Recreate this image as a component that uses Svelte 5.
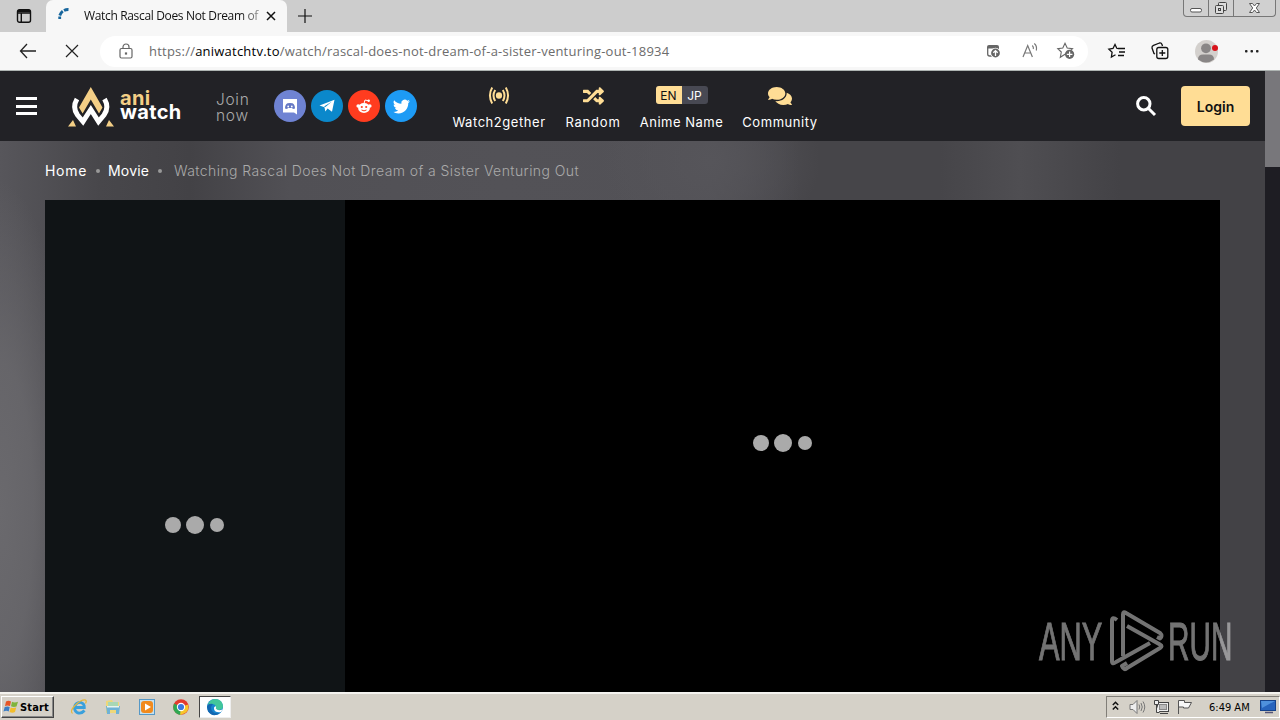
<script>
  const crumbs = ['Home', 'Movie'];
</script>

{#snippet loader()}
  <div class="loader"><i></i><i class="big"></i><i class="small"></i></div>
{/snippet}

<div class="screen">
  <div class="tabs">
    <svg class="tabmenu" width="16" height="16" viewBox="0 0 16 16" fill="none" stroke="#111" stroke-width="1.4"><rect x="1.5" y="1.7" width="13" height="12.6" rx="2" /><path d="M2 5h12M5.3 5v9" /><path d="M2 3h12" stroke-width="2.4" /></svg>
    <div class="tab">
      <svg width="12" height="12" viewBox="0 0 12 12" fill="none" stroke="#17669d" stroke-width="2.8"><path d="M1.700 11V8.500M1.800 7.500Q2.500 5 4.800 3.200M6 2.500Q8 1.400 10.500 1.500" /></svg>
      <span class="tabtitle">Watch Rascal Does Not Dream of</span>
      <svg class="close" width="10" height="10" viewBox="0 0 10 10" stroke="#111" stroke-width="1.5"><path d="M1 1l8 8M9 1L1 9" /></svg>
    </div>
    <svg class="plus" width="16" height="16" viewBox="0 0 16 16" stroke="#111" stroke-width="1.2"><path d="M8 1v14M1 8h14" /></svg>
    <div class="winbtns">
      <span><svg width="25" height="16" viewBox="0 0 25 16" fill="#fff" stroke="#555"><rect x="6.500" y="8.500" width="11" height="3.500" rx="1.500" /></svg></span>
      <span><svg width="24" height="16" viewBox="0 0 24 16" fill="#ddd" stroke="#444"><rect x="9.500" y="2.500" width="8" height="8" rx="1" /><rect x="6.500" y="5.500" width="8" height="8" rx="1" /><rect x="9.500" y="8.500" width="2" height="2" /></svg></span>
      <span><svg width="41" height="16" viewBox="0 0 41 16" fill="#fff" stroke="#555"><path d="M15.500 3.500h3l2 2.500 2-2.500h3l-3.200 4.500 3.200 4.500h-3l-2-2.500-2 2.500h-3l3.200-4.500z" /></svg></span>
    </div>
  </div>

  <div class="toolbar">
    <svg class="back" width="18" height="16" viewBox="0 0 18 16" fill="none" stroke="#222" stroke-width="1.300"><path d="M8 1L1.500 8 8 15M1.500 8H17" /></svg>
    <svg class="stop" width="14" height="14" viewBox="0 0 14 14" stroke="#222" stroke-width="1.200"><path d="M1 1l12 12M13 1L1 13" /></svg>
    <div class="address">
      <svg class="lock" width="14" height="17" viewBox="0 0 14 17" fill="none" stroke="#666" stroke-width="1.200"><rect x="1" y="5.500" width="12" height="9.500" rx="1.500" /><path d="M4 5.500V4a3 3 0 016 0v1.500" /><rect x="6.500" y="10" width="1" height="1" /></svg>
      <span class="url">https://<b>aniwatchtv.to</b>/watch/rascal-does-not-dream-of-a-sister-venturing-out-18934</span>
      <svg class="a1" width="16" height="16" viewBox="0 0 16 16"><path d="M1.700 4v6a2 2 0 002 2H6M12.300 3v2" fill="none" stroke="#666" stroke-width="1.300" /><path d="M1 4.500V3a2 2 0 012-2h8a2 2 0 012 2v1.500z" fill="#666" /><circle cx="9.500" cy="9" r="5.200" fill="#fff" /><circle cx="9.500" cy="9" r="4.400" fill="#666" /><path d="M9.500 12V7M7.300 8.800l2.200-2.200 2.200 2.200" fill="none" stroke="#fff" stroke-width="1.300" /></svg>
      <svg class="a2" width="18" height="16" viewBox="0 0 18 16" fill="none" stroke="#777" stroke-width="1.200"><path d="M1 14L5.700 2.500 10.400 14M2.800 10h5.800M10.300 2.500q1.500 1.500 1 3.500M12.300 .5q3 2.500 2 7" /></svg>
      <svg class="a3" width="18" height="18" viewBox="0 0 18 18"><path d="M8 1.300l2.200 4.800 5.300.6-3.900 3.600L8 12.300l-4.700 3 1-5.300L.8 6.700l5-.6z" fill="none" stroke="#666" stroke-width="1.100" /><circle cx="12.600" cy="12.300" r="4.600" fill="#666" /><path d="M12.600 9.500v5.600M9.800 12.300h5.600" stroke="#fff" stroke-width="1.200" /></svg>
    </div>
    <svg class="fav" width="18" height="16" viewBox="0 0 18 16" fill="none" stroke="#111" stroke-width="1.300"><path d="M10.300 5.600L8.800 5.300 7 1.400 5 5.500.9 6.200l3.200 3L3.400 14 7.500 11.800M10 5.500h7M11 9h6M10 12.500h6" /></svg>
    <svg class="coll" width="18" height="18" viewBox="0 0 18 18" fill="none" stroke="#111" stroke-width="1.300"><path d="M4 12L3 11.500 1 6Q.7 4 2.500 3.300L8.500 1Q10.300 .6 11 2.500L11.500 4" /><rect x="5.800" y="5.500" width="11" height="11" rx="2" /><path d="M11.300 8v6M8.300 11h6" /></svg>
    <div class="avatar"><svg width="23" height="23" viewBox="0 0 23 23"><circle cx="11.500" cy="11.500" r="11.500" fill="#d3d0cd" /><circle cx="11" cy="8.300" r="4.900" fill="#898686" /><path d="M3 19.500q0-5 5-5h6q5 0 5 5-8 6-16 0z" fill="#898686" /><circle cx="20" cy="8" r="3" fill="#d8131b" /></svg></div>
    <svg class="dots" width="14" height="4" viewBox="0 0 14 4" fill="#222"><rect x="0" y="1" width="2.500" height="2.500" rx=".8" /><rect x="5.500" y="1" width="2.500" height="2.500" rx=".8" /><rect x="11" y="1" width="2.500" height="2.500" rx=".8" /></svg>
  </div>

  <div class="view">
    <div class="site">
      <header>
        <div class="burger"><i></i><i></i><i></i></div>
        <svg class="logo" width="46" height="41" viewBox="0 0 46 41"><path d="M9 12Q4 20.500 9.500 28L15 34.500 22.800 22.500 30.500 34.500 36 28Q41.500 20.500 36.500 12" fill="none" stroke="#fff" stroke-width="5" /><path d="M22.800 0L34.500 20.500 31 26.500 22.800 12.500 14.600 26.500 11 20.500z" fill="#f4cf86" /><path d="M5 33L8 39.500H0zM41 33L38 39.500h8z" fill="#f4cf86" /></svg>
        <div class="wordmark"><span class="gold">ani</span><span>watch</span></div>
        <div class="join">Join<br />now</div>
        <div class="social">
          <span class="discord"><svg width="16" height="17" viewBox="0 0 16 17"><path d="M1 1h14v15.500l-3-2H1z" fill="#fff" /><path d="M3 10.500q0-4 2.500-5.200L8 5l2.500.3Q13 6.500 13 10.500L11 11l-1-1H6l-1 1z" fill="#6578c4" /><circle cx="6.200" cy="8.500" r=".9" fill="#fff" /><circle cx="9.800" cy="8.500" r=".9" fill="#fff" /></svg></span>
          <span class="telegram"><svg width="16" height="14" viewBox="0 0 16 14" fill="#fff"><path d="M15.500.8L13 12.800 8.600 9.600 6.300 12.500 5.500 8.200.5 6.500zM6.400 8L13 2.500 5 7.500z" /></svg></span>
          <span class="reddit"><svg width="16" height="16" viewBox="0 0 16 16"><ellipse cx="8" cy="10" rx="5.900" ry="4.900" fill="#fff" /><circle cx="2.200" cy="8" r="1.800" fill="#fff" /><circle cx="13.800" cy="8" r="1.800" fill="#fff" /><path d="M8 5.500L9 2l3.500.8" fill="none" stroke="#fff" /><circle cx="12.700" cy="2.700" r="1.200" fill="#fff" /><circle cx="5.800" cy="9" r="1.100" fill="#ff3d20" /><circle cx="10.200" cy="9" r="1.100" fill="#ff3d20" /><path d="M5.500 12q2.500 1.700 5 0" fill="none" stroke="#ff3d20" /></svg></span>
          <span class="twitter"><svg width="17" height="17" viewBox="0 0 24 24" fill="#fff"><path d="M23.950 4.570a10 10 0 01-2.820.770 4.960 4.960 0 002.160-2.720c-.950.550-2 .950-3.130 1.180a4.920 4.920 0 00-8.380 4.480C7.690 8.090 4.070 6.130 1.640 3.160a4.920 4.920 0 001.520 6.570 4.900 4.900 0 01-2.230-.610v.060a4.920 4.920 0 003.950 4.830 5 5 0 01-2.210.080 4.940 4.940 0 004.600 3.420A9.870 9.870 0 010 19.540a14 14 0 007.550 2.210c9.050 0 14-7.500 14-13.980 0-.210 0-.420-.020-.630a9.940 9.940 0 002.420-2.570z" /></svg></span>
        </div>
        <nav>
          <div class="n1"><svg width="20" height="17" viewBox="0 0 20 16" preserveAspectRatio="none" fill="none" stroke="#ffdd95" stroke-width="2"><circle cx="10" cy="8" r="3.100" fill="#ffdd95" stroke="none" /><path d="M6.200 2.800Q2.800 8 6.200 13.200M13.800 2.800Q17.200 8 13.800 13.200M3.200 .5Q-1.300 8 3.200 15.500M16.800 .5Q21.300 8 16.800 15.500" /></svg><span>Watch2gether</span></div>
          <div class="n2"><svg width="21" height="20" viewBox="0 0 512 512" preserveAspectRatio="none" fill="#ffdd95"><path d="M505 360c9 9 9 25 0 34l-80 80c-15 15-41 4-41-17v-41h-58c-4 0-7-1-9-4l-70-75 53-57 53 56h31v-40c0-21 26-32 41-17zM12 176h84l53 57 53-57-70-75c-2-3-5-5-9-5H12c-7 0-12 5-12 12v56c0 7 5 12 12 12zm372 0v40c0 21 26 32 41 17l80-80c9-9 9-25 0-34l-80-80c-15-15-41-4-41 17v40h-58c-3 0-6 2-9 4L96 336H12c-7 0-12 5-12 12v56c0 7 5 12 12 12h111c3 0 6-1 9-4l221-236z" /></svg><span>Random</span></div>
          <div class="n3"><div class="lang"><b>EN</b><em>JP</em></div><span>Anime Name</span></div>
          <div class="n4"><svg width="24" height="18" viewBox="0 0 576 448" preserveAspectRatio="none" fill="#ffdd95"><path d="M416 160C416 72 323 0 208 0S0 72 0 160c0 34 14 66 38 92-13 30-36 54-36 55-2 2-3 6-1 9s4 4 7 4c37 0 67-12 89-25 32 16 70 25 111 25 115 0 208-72 208-160zm122 220c24-26 38-57 38-92 0-66-53-123-128-147 1 6 0 13 0 19 0 106-108 192-240 192-11 0-21-1-32-2 32 58 103 98 192 98 41 0 79-9 111-25 22 13 52 25 89 25 3 0 6-2 7-4 1-3 1-7-1-9 0-1-23-25-36-55z" /></svg><span>Community</span></div>
        </nav>
        <svg class="search" width="20" height="20" viewBox="0 0 20 20" fill="none" stroke="#fff" stroke-width="3"><circle cx="7.800" cy="7.800" r="6.200" /><path d="M12.500 12.500l6.500 6.500" /></svg>
        <div class="login">Login</div>
      </header>
      <div class="crumbs">
        {#each crumbs as c, i}<span class="c{i}">{c}</span><i></i>{/each}<span class="here">Watching Rascal Does Not Dream of a Sister Venturing Out</span>
      </div>
      <div class="player">
        <aside>{@render loader()}</aside>
        <main>{@render loader()}</main>
      </div>
    </div>
    <div class="scroll"><div></div></div>
  </div>

  <div class="taskbar">
    <div class="start"><svg width="17" height="16" viewBox="0 0 16 16"><path d="M2.500 2.500Q5 .8 7.500 2.500L6.500 7Q4 5.800 1.500 7z" fill="#e65526" /><path d="M8.500 2.800Q11 4.200 14.500 2.800L13 7.500Q10 8.500 7.500 7.200z" fill="#7fb43c" /><path d="M1.200 8Q4 6.800 6.200 8L5.200 12.500Q3 11.200 0 12.500z" fill="#3c7dc4" /><path d="M7.200 8.500Q10 9.600 12.700 8.600L11.500 13Q9 14.500 6 13z" fill="#f3bd2b" /></svg><span>Start</span></div>
    <div class="apps">
      <svg width="18" height="18" viewBox="0 0 18 18" fill="none"><path d="M14.500 12.500Q11 16.500 7 14.500 3.500 12 5 7.500 7 4 11 4.500 14.500 5.500 14.300 9.500H6" stroke="#39a0dc" stroke-width="2.800" /><path d="M2.500 15.500Q-.5 13 5 7.500 11 1.500 15.500 2q1.500 1 0 3.500" stroke="#e6b73b" stroke-width="1.200" /></svg>
      <svg width="18" height="18" viewBox="0 0 18 18"><path d="M2 3l6-1 1 2h6v11H2z" fill="#eed779" /><path d="M4 4h10v5H4z" fill="#a8d7b5" /><path d="M2 8h14l-1 8h-3v-4H6v4H3z" fill="#6fb2d6" /><path d="M3 8h12v1.500H3z" fill="#e9f3ec" /></svg>
      <svg width="18" height="18" viewBox="0 0 18 18"><rect x="1.500" y="1.500" width="15" height="15" fill="#c6e0ee" stroke="#5698c6" /><rect x="3" y="3" width="12" height="12" rx="3" fill="#f18a1d" /><path d="M7 5.500v7l6-3.500z" fill="#fff" /></svg>
      <svg width="18" height="18" viewBox="0 0 18 18"><circle cx="9" cy="9" r="7.800" fill="#e33b2e" /><path d="M9 9L2 5.500Q-1 13 6.500 16.500L9 17z" fill="#30a852" /><path d="M9 9l7.200-2.500Q18 15 9 16.800l-1 0z" fill="#f7c62b" /><circle cx="9" cy="9" r="4.200" fill="#fff" /><circle cx="9" cy="9" r="3.100" fill="#3c79e0" /></svg>
    </div>
    <div class="active"><svg width="18" height="18" viewBox="0 0 18 18"><circle cx="9" cy="9" r="8" fill="#1685cf" /><path d="M1.500 7Q4 1 9 1q7 0 8 7 0 4-5 4-3 0-2-3-1-5-8.500-2z" fill="#42c69a" /><path d="M1 9q1-4 6-3-4 4 0 8 2 2 7 1Q7 20 2 13.500z" fill="#1267b1" /><path d="M9.500 8q1 1 .3 2.500 2 3 7 .8L15 14q-6 1-7-3-.5-2 1.500-3z" fill="#fff" /></svg></div>
    <div class="tray">
      <svg class="chev" width="7" height="10" viewBox="0 0 7 10" fill="none" stroke="#111" stroke-width="1.500"><path d="M.8 4l2.700-2.700L6.200 4M.8 8.500l2.700-2.700 2.700 2.700" /></svg>
      <svg class="vol" width="18" height="16" viewBox="0 0 18 16" fill="none" stroke="#777"><path d="M1 5.500h3l4-4v13l-4-4H1z" fill="#eee" /><path d="M10 5.500q1.500 2.500 0 5M12 4q2.500 4 0 8M14 2.500q3.500 5.500 0 11" /></svg>
      <svg class="net" width="17" height="16" viewBox="0 0 17 16" fill="#eee" stroke="#444"><rect x="4.500" y="3.500" width="11" height="9" /><rect x="6.500" y="5.500" width="7" height="5" fill="#bbb" stroke="#888" /><path d="M7 14.500h8" /><path d="M1.500 1.500h4v4h-4zM3.500 5.500v8h3" /></svg>
      <svg class="flag" width="17" height="16" viewBox="0 0 17 16" fill="#f7f7f7" stroke="#555"><path d="M1.500 15V1.500h6v2h7l-3 5.500h-5v-1h-5" /></svg>
      <span class="clock">6:49 AM</span>
      <svg class="desk" width="16" height="14" viewBox="0 0 16 14"><rect x=".5" y=".5" width="15" height="10" fill="#2764bd" stroke="#16428a" /><path d="M1 1h14L2 8z" fill="#4f91dd" /><path d="M5 12.500h8" stroke="#557" stroke-width="1.500" /></svg>
    </div>
  </div>

  <div class="watermark">
    <span>ANY</span>
    <svg width="56" height="64" viewBox="0 0 56 64" fill="none" stroke="currentColor" stroke-width="4" stroke-linejoin="round"><path d="M14 47V5.500Q14 2 17 4L51 24Q54 27 51 29.500L48 28M8 11Q3 7 3 12V52Q3 56 7 53L41 34M18 17L51 35.500Q54 37 51 39L18 59Q15 62 13 57L18 54" /></svg>
    <span class="run">RUN</span>
  </div>
</div>

<style>
  :global(body) { margin: 0; overflow: hidden; }
  * { box-sizing: border-box; }
  svg { display: block; flex: none; overflow: visible; }
  .screen { width: 1280px; height: 720px; position: relative; display: flex; flex-direction: column; overflow: hidden; font-family: Inter, sans-serif; }
  .tabs { height: 32px; background: #cdcdcd; display: flex; align-items: flex-start; flex: none; }
  .tabmenu { margin: 8px 0 0 16px; }
  .tab { width: 241px; height: 32px; margin-left: 14px; background: #f7f7f7; border-radius: 7px 7px 0 0; display: flex; padding-left: 12px; }
  .tab > svg:first-child { margin-top: 8px; }
  .tabtitle { width: 176px; margin: 8px 0 0 14px; font: 12px/16px "Open Sans", sans-serif; letter-spacing: -.34px; white-space: nowrap; color: #111; -webkit-mask-image: linear-gradient(90deg, #000 155px, #0006 176px); mask-image: linear-gradient(90deg, #000 155px, #0006 176px); }
  .close { margin: 11px 0 0 6px; }
  .plus { margin: 8px 0 0 10px; }
  .winbtns { margin-left: auto; margin-right: 4px; height: 17px; display: flex; border: 1px solid #777; border-top: 0; border-radius: 0 0 4px 4px; background: #d0d0d0; }
  .winbtns span + span { border-left: 1px solid #777; }
  .winbtns span:first-child { width: 24px; }
  .toolbar { height: 39px; flex: none; background: #f7f7f7; display: flex; align-items: center; border-bottom: 1px solid #aeb4b2; }
  .back { margin-left: 19px; }
  .stop { margin-left: 28px; }
  .address { width: 988px; height: 31px; margin-left: 21px; background: #fff; border-radius: 16px; display: flex; align-items: center; }
  .lock { margin-left: 19px; }
  .url { margin-left: 16px; width: 837px; font: 13px/18px "Open Sans", sans-serif; color: #6c6c6c; white-space: nowrap; letter-spacing: .225px; }
  .url b { font-weight: 400; color: #000; }
  .a1 { margin-top: 2px; }
  .a2 { margin-left: 20px; }
  .a3 { margin-left: 17px; }
  .fav { margin-left: 20px; }
  .coll { margin-left: 25px; }
  .avatar { margin-left: 26px; }
  .dots { margin-left: 27px; }
  .view { flex: 1; display: flex; min-height: 0; }
  .site { width: 1265px; display: flex; flex-direction: column; background:
    radial-gradient(ellipse 75px 330px at 0 440px, #6a696d, #6a696dcc 45%, transparent),
    radial-gradient(ellipse 110px 90px at 710px 90px, #56555a, transparent),
    linear-gradient(90deg, #57565b 0, #48474b 100px, #434246 190px, #515055 290px, #535257 500px, #525156 710px, #464549 800px, #464549 940px, #4f4e52 1020px, #434246 1120px, #434246 1265px); }
  header { height: 70px; flex: none; background: #222226; display: flex; align-items: flex-start; }
  .burger { width: 21px; margin: 26px 0 0 16px; display: flex; flex-direction: column; gap: 4.500px; }
  .burger i { height: 3px; background: #fff; }
  .logo { margin: 16px 0 0 31px; }
  .wordmark { width: 64px; margin: 20px 0 0 6px; display: flex; flex-direction: column; font: 700 20px/14px Inter, sans-serif; letter-spacing: .35px; color: #fff; }
  .gold { color: #f4cf86; }
  .join { width: 34px; margin: 21px 0 0 32px; font-weight: 300; font-size: 15.500px; line-height: 16px; letter-spacing: .7px; color: #aaa; }
  .social { display: flex; gap: 5px; margin: 19px 0 0 24px; }
  .social span { width: 32px; height: 32px; border-radius: 50%; display: flex; align-items: center; justify-content: center; }
  .discord { background: #6f83d3; } .telegram { background: #0b88cb; } .reddit { background: #ff3c1f; } .twitter { background: #1d9bf5; }
  nav { display: flex; margin-left: 35px; gap: 19px; color: #fff; font-size: 13px; }
  nav > div { display: flex; flex-direction: column; align-items: center; height: 70px; white-space: nowrap; }
  nav svg { margin-top: 16px; }
  .n2 svg { margin-top: 15px; }
  nav div > span { margin-top: auto; margin-bottom: 10px; line-height: 17px; }
  .n1 { width: 94px; letter-spacing: .55px; } .n2 { width: 56px; letter-spacing: .8px; } .n3 { width: 83px; letter-spacing: .5px; } .n4 { width: 76px; letter-spacing: .55px; }
  .lang { display: flex; width: 52px; height: 18px; margin-top: 15px; border-radius: 3px; overflow: hidden; font-size: 12px; line-height: 19px; text-align: center; background: #484953; letter-spacing: 0; }
  .lang b { width: 26px; background: #ffdd95; color: #111; font-weight: 400; }
  .lang em { width: 26px; font-style: normal; }
  .search { margin: 25px 0 0 auto; }
  .login { width: 69px; height: 40px; margin: 15px 15px 0 25px; border-radius: 4px; background: #ffdd95; color: #111; text-align: center; font-weight: 600; font-size: 14px; line-height: 41px; }
  .crumbs { height: 58px; margin-bottom: 1px; flex: none; padding-left: 45px; display: flex; align-items: center; color: #fff; font-size: 14px; white-space: nowrap; }
  .crumbs i { width: 4px; height: 4px; border-radius: 2px; background: #999; margin: 1px 8px 0 9px; }
  .c0 { width: 42px; letter-spacing: .7px; } .c1 { width: 41px; letter-spacing: .2px; }
  .here { font-weight: 300; color: #aaa; margin-left: 4px; letter-spacing: .42px; }
  .player { flex: 1; display: flex; margin: 0 45px; width: 1175px; }
  aside { width: 300px; background: #101416; display: flex; justify-content: center; padding: 314px 1px 0 0; }
  main { flex: 1; background: #000; display: flex; justify-content: center; padding-top: 232px; }
  .loader { height: 21px; display: flex; gap: 5px; align-items: center; }
  .loader i { width: 16px; height: 16px; border-radius: 50%; background: #aaa; }
  .loader .big { width: 18px; height: 18px; }
  .loader .small { width: 14px; height: 14px; margin-left: 1px; }
  .scroll { width: 15px; background: #1e1d23; }
  .scroll div { height: 96px; background: #78777b; }
  .taskbar { height: 28px; flex: none; background: #d5d1c8; border-top: 2px solid #f4f3ef; display: flex; align-items: flex-start; color: #000; }
  .start { width: 53px; height: 22px; margin: 2px 0 0 1px; border: 1px solid; border-color: #fff #444 #444 #fff; box-shadow: inset -1px -1px #888; display: flex; align-items: center; padding-left: 1px; font: 700 11px "DejaVu Sans Condensed", "DejaVu Sans", sans-serif; letter-spacing: .15px; }
  .apps { display: flex; gap: 16px; margin: 4px 0 0 16px; }
  .active { width: 32px; height: 22px; margin: 2px 0 0 9px; background: #fff; border: 1px solid; border-color: #444 #eee #eee #444; display: flex; justify-content: center; align-items: center; }
  .tray { width: 174px; height: 22px; margin: 2px 0 0 auto; border: 1px solid; border-color: #817e78 #fff #fff #817e78; display: flex; align-items: center; font: 11px "DejaVu Sans Condensed", "DejaVu Sans", sans-serif; }
  .chev { margin-left: 5px; margin-top: -3px; } .vol { margin-left: 10px; } .net { margin-left: 6px; } .flag { margin-left: 7px; }
  .clock { width: 43px; margin-left: 15px; letter-spacing: 0; white-space: nowrap; }
  .desk { margin-left: 8px; }
  .watermark { position: absolute; left: 1039px; top: 609px; display: flex; align-items: center; color: #fff; opacity: .45; font: 54px/64px "Liberation Sans Narrow", "Liberation Sans", sans-serif; -webkit-text-stroke: 1px #fff; }
  .watermark span { display: block; width: 63px; transform-origin: left center; transform: scaleX(.57); white-space: nowrap; }
  .watermark .run { transform: scaleX(.55); }
  .watermark svg { margin: 0 3px 0 7px; }
</style>
